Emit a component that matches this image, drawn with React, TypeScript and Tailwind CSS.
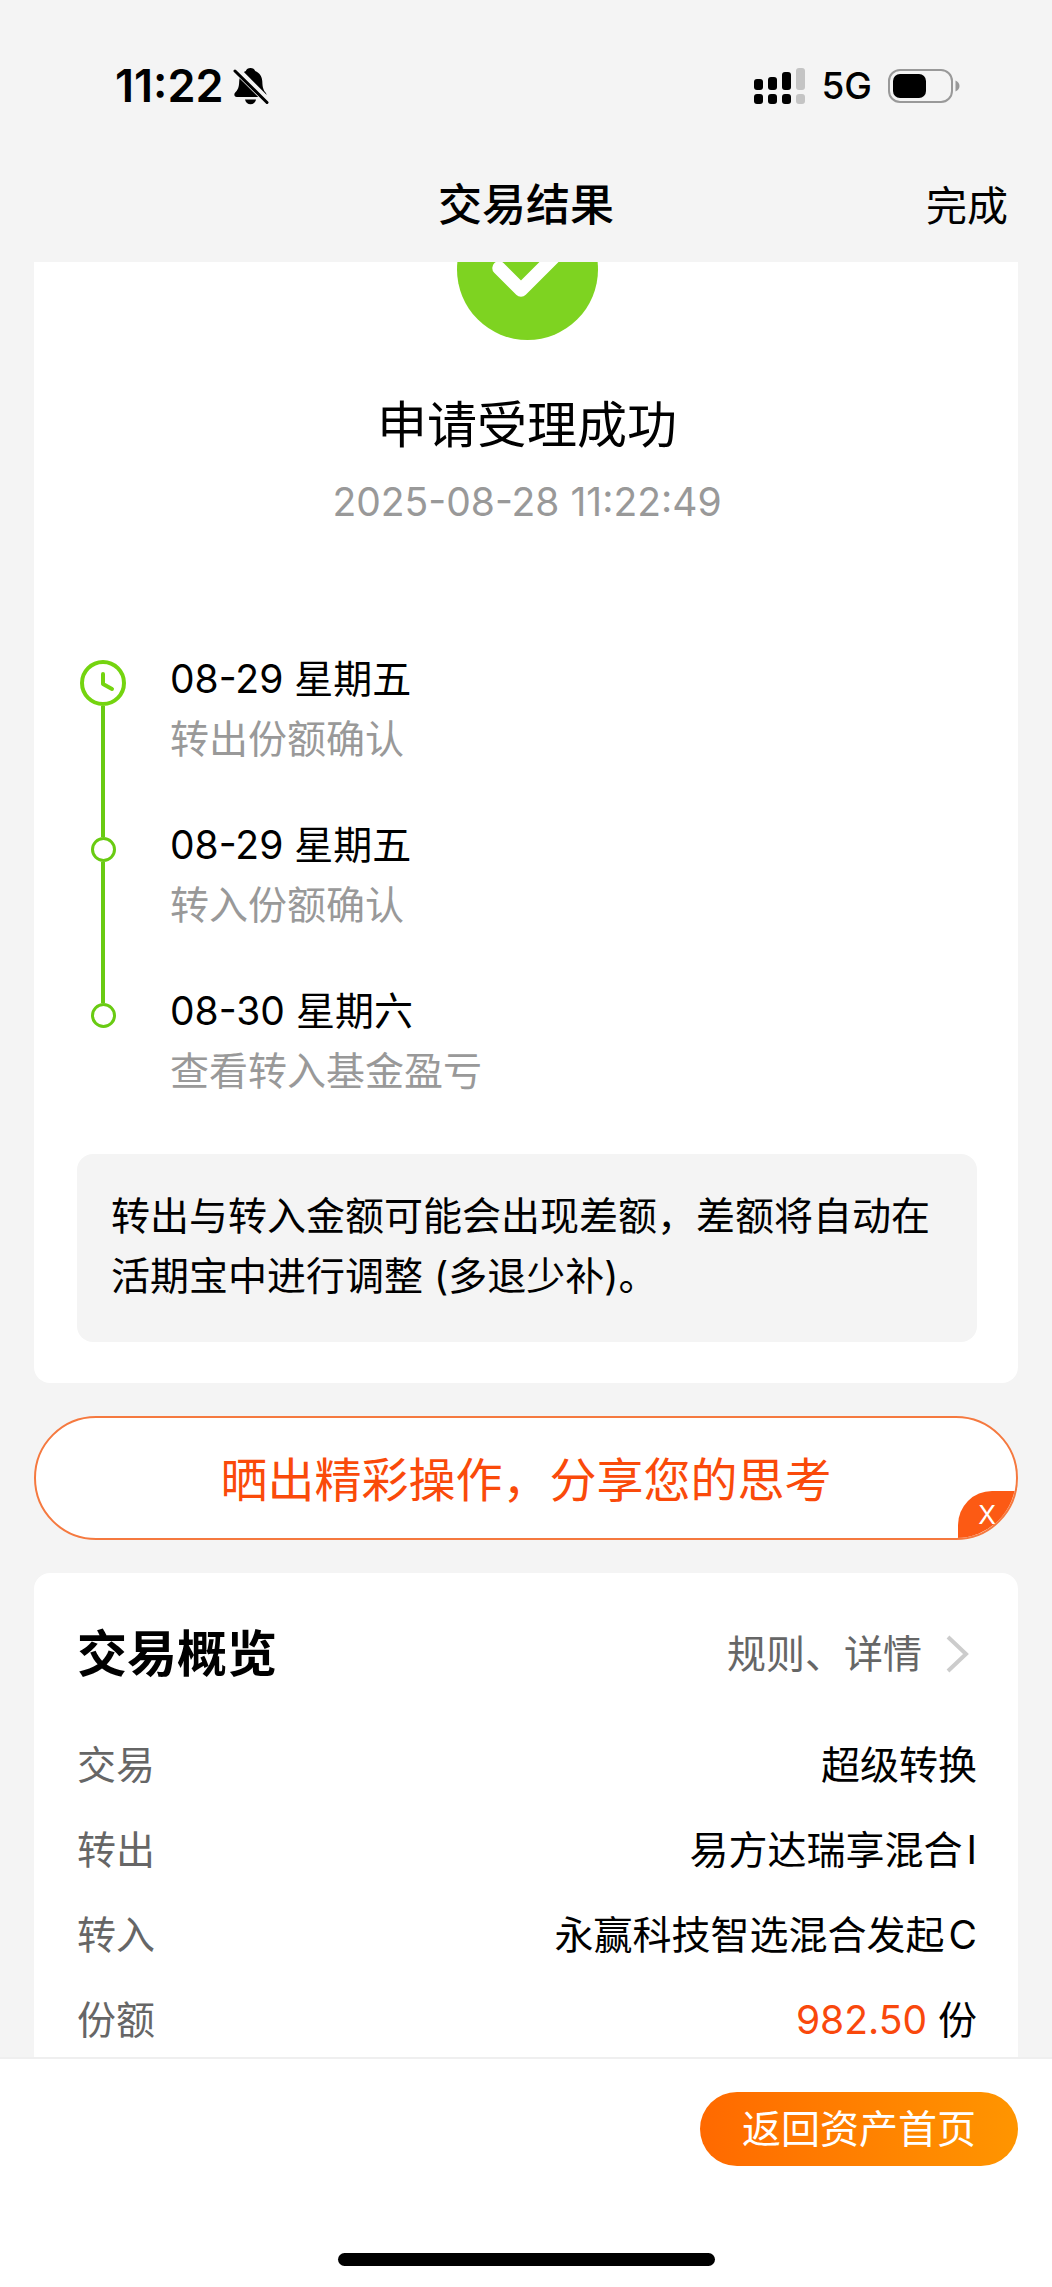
import React, { useState } from 'react';

interface Step {
  date: string;
  label: string;
}

interface Row {
  name: string;
  value: React.ReactNode;
}

const STEPS: Step[] = [
  { date: '08-29 星期五', label: '转出份额确认' },
  { date: '08-29 星期五', label: '转入份额确认' },
  { date: '08-30 星期六', label: '查看转入基金盈亏' },
];

const ROWS: Row[] = [
  { name: '交易', value: '超级转换' },
  { name: '转出', value: <>易方达瑞享混合<span className="ml-1">I</span></> },
  { name: '转入', value: <>永赢科技智选混合发起<span className="ml-1">C</span></> },
  { name: '份额', value: <><span className="text-[#f9480c]">982.50</span> 份</> },
];

const BellOffIcon = () => (
  <svg className="w-9 h-[38px]" viewBox="0 0 36 38" aria-hidden="true">
    <path d="M17.500 1c2.400 0 4 1.200 4.700 3 4.300 1.700 6.900 5.500 7.100 10.500.2 6 1 8.500 3.400 11.300 1.300 1.500.9 4.200-1.700 4.200H3.800C1.200 30 .6 27.300 2.200 25.600 5 22.500 6 20.500 6.200 14.500 6.400 9.500 8.600 5.700 12.800 4c.7-1.800 2.300-3 4.700-3z" fill="#000" />
    <path d="M12 32.500h11c-.6 3-2.800 4.800-5.500 4.800s-4.900-1.800-5.500-4.800z" fill="#000" />
    <path d="M3.500 3l33 33" stroke="#f4f4f4" strokeWidth="7.500" />
    <path d="M2 4l32 31.500" stroke="#000" strokeWidth="3" strokeLinecap="round" />
  </svg>
);

const SignalIcon = () => (
  <svg className="w-[51px] h-9" viewBox="0 0 51 36" aria-hidden="true">
    <g fill="#000">
      <rect x="0" y="11" width="9" height="11" rx="3" />
      <rect x="14" y="9" width="9" height="13" rx="3" />
      <rect x="28" y="4" width="9" height="18" rx="3" />
      <rect x="0" y="26" width="9" height="10" rx="3" />
      <rect x="14" y="26" width="9" height="10" rx="3" />
      <rect x="28" y="26" width="9" height="10" rx="3" />
    </g>
    <g fill="#c4c4c4">
      <rect x="42" y="0" width="9" height="22" rx="3" />
      <rect x="42" y="26" width="9" height="10" rx="3" />
    </g>
  </svg>
);

const BatteryIcon = () => (
  <svg className="w-[72px] h-[34px]" viewBox="0 0 72 34" aria-hidden="true">
    <rect x="1" y="1" width="63" height="32" rx="11" fill="none" stroke="#999" strokeWidth="2" />
    <rect x="5" y="5" width="33" height="24" rx="7" fill="#000" />
    <path d="M67.500 11.500c2.500 1 4 3 4 5.500s-1.500 4.500-4 5.500z" fill="#999" />
  </svg>
);

const ClockIcon = () => (
  <svg className="w-[46px] h-[46px] shrink-0" viewBox="0 0 46 46" fill="none" stroke="#74d40f" strokeWidth="4" strokeLinecap="round" strokeLinejoin="round" aria-hidden="true">
    <circle cx="23" cy="23" r="21" />
    <path d="M23 14v10l9 5" />
  </svg>
);

const StatusBar = () => (
  <div className="h-[172px] pl-[115px] pr-[92px] flex items-center justify-between">
    <div className="flex items-center gap-[10px]">
      <span className="text-[45px] font-semibold">11:22</span>
      <BellOffIcon />
    </div>
    <div className="flex items-center gap-4">
      <SignalIcon />
      <span className="text-[37px] font-medium">5G</span>
      <BatteryIcon />
    </div>
  </div>
);

const Timeline = () => (
  <ol className="mt-[117px]">
    {STEPS.map((step, i) => {
      const first = i === 0;
      const last = i === STEPS.length - 1;
      return (
        <li key={i} className="flex gap-[41px]">
          <div className="w-[52px] flex flex-col items-center">
            {first ? (
              <>
                <span className="h-[11px]" />
                <ClockIcon />
              </>
            ) : (
              <>
                <span className="w-1 h-[22px] bg-[#69cb12]" />
                <span className="w-[25px] h-[25px] shrink-0 rounded-full border-[3px] border-[#69cb12]" />
              </>
            )}
            {!last && <span className="w-1 flex-1 bg-[#69cb12]" />}
          </div>
          <div className={last ? '' : 'pb-[46px]'}>
            <p>{step.date}</p>
            <p className="text-[#999]">{step.label}</p>
          </div>
        </li>
      );
    })}
  </ol>
);

const App: React.FC = () => {
  const [showBanner, setShowBanner] = useState(true);

  return (
    <div className="min-h-screen flex flex-col bg-[#f4f4f4] text-black text-[39px] leading-[60px] font-['Inter','Noto_Sans_CJK_SC',sans-serif]">
      <header>
        <StatusBar />
        <div className="h-[90px] pt-[3px] px-[44px] grid grid-cols-[1fr_auto_1fr] items-baseline">
          <h1 className="col-start-2 text-[44px] font-medium">交易结果</h1>
          <button className="justify-self-end text-[41px]">完成</button>
        </div>
      </header>

      <main className="flex-1 px-[34px] flex flex-col gap-[33px]">
        <section className="bg-white rounded-b-2xl pl-[43px] pr-[41px] pb-[41px]">
          {/* lower part of the badge, the rest is scrolled under the header */}
          <svg className="mx-auto w-[141px] h-[78px]" viewBox="0 63 141 78" aria-hidden="true">
            <circle cx="70.500" cy="70.500" r="70.500" fill="#7ed321" />
            <path d="M42 69l22 22 42-42" fill="none" stroke="#fff" strokeWidth="13.500" strokeLinecap="round" strokeLinejoin="round" />
          </svg>
          <h2 className="mt-[50px] text-center text-[50px] leading-[70px]">申请受理成功</h2>
          <p className="mt-3 text-center text-[#999]">2025-08-28 11:22:49</p>

          <Timeline />

          <p className="mt-[53px] px-[34px] pt-8 pb-9 rounded-2xl bg-[#f4f4f4]">
            转出与转入金额可能会出现差额，差额将自动在活期宝中进行调整 (多退少补)。
          </p>
        </section>

        {showBanner && (
          <div className="relative h-[124px] pt-1 rounded-full border-2 border-[#f5793f] bg-white overflow-hidden flex items-center justify-center">
            <a href="#share" className="text-[47px] text-[#fa4a0a]">晒出精彩操作，分享您的思考</a>
            <button
              onClick={() => setShowBanner(false)}
              className="absolute right-0 bottom-0 w-[58px] h-[47px] rounded-tl-[34px] bg-[#fc5a14] text-white text-[26px] leading-[47px]"
            >
              X
            </button>
          </div>
        )}

        <section className="flex-1 bg-white rounded-t-2xl pl-[43px] pr-[41px] pt-[46px]">
          <div className="flex items-center justify-between">
            <h2 className="text-[50px] leading-[70px] font-bold">交易概览</h2>
            <a href="#detail" className="flex items-center gap-6 pr-2 text-[#666]">
              规则、详情
              <svg className="w-[23px] h-[38px]" viewBox="0 0 23 38" fill="none" stroke="#ccc" strokeWidth="4" aria-hidden="true">
                <path d="M2 2l18 17L2 36" />
              </svg>
            </a>
          </div>
          <dl className="mt-[46px] flex flex-col gap-[25px]">
            {ROWS.map((row) => (
              <div key={row.name} className="flex justify-between">
                <dt className="text-[#666]">{row.name}</dt>
                <dd>{row.value}</dd>
              </div>
            ))}
          </dl>
        </section>
      </main>

      <footer className="bg-white border-t-2 border-[#efefef] px-[34px] pt-[33px] pb-[21px] flex flex-col">
        <button className="self-end h-[74px] px-[42px] rounded-full bg-linear-to-r from-[#ff6900] to-[#ff9500] text-white">
          返回资产首页
        </button>
        <div className="mt-[87px] mx-auto w-[377px] h-[13px] rounded-full bg-black" />
      </footer>
    </div>
  );
};

export default App;
